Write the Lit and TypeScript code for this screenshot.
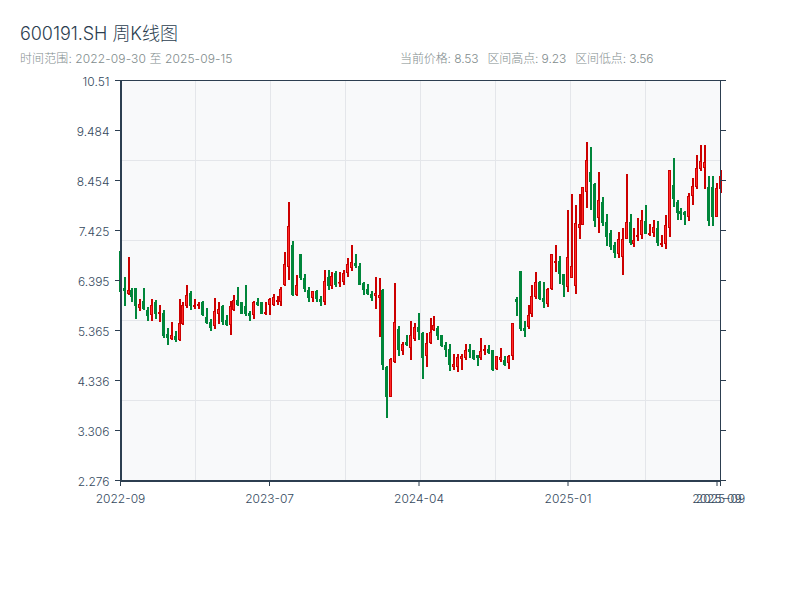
import { LitElement, html, css, svg } from "lit";
import { customElement } from "lit/decorators.js";

type Row = [number, number, number, number, number];
// [1 = up (red) / 0 = down (green), wick top, body top, body bottom, wick bottom], in 3x crop units
const A: Row[] = [
[0,213,213,335,335],[0,291,325,333,378],[1,231,330,342,345],[0,325,330,350,365],[0,325,325,378,417],[1,357,372,384,393],[0,325,363,387,390],[0,381,390,408,423],[1,357,376,405,423],[0,360,367,402,417],
[1,375,397,402,426],[0,390,399,468,474],[0,444,462,474,495],[1,426,465,477,480],[0,453,468,480,486],[1,357,429,480,483],[1,366,375,432,435],[1,315,345,378,385],[0,333,340,378,390],[1,357,375,381,387],
[1,366,372,378,387],[0,363,365,405,408],[0,384,411,430,432],[0,417,426,444,453],[1,354,393,438,447],[1,366,387,402,432],[0,375,378,426,435],[0,405,420,435,438],[1,363,378,435,465],[1,345,360,390,393],
[0,321,360,375,378],[0,366,366,402,402],[0,315,378,402,408],[0,393,400,408,423],[1,363,366,405,417],[0,354,366,375,378],[0,366,366,402,402],[1,366,396,402,405]];
const B: Row[] = [
[1,325,328,345,375],[1,312,322,345,348],[1,318,330,335,345],[1,292,298,335,348],[1,186,222,286,288],[1,36,108,230,270],[0,153,165,315,318],[1,255,286,316,318],[0,192,192,264,270],[0,252,264,297,306],
[0,292,300,324,336],[1,303,303,324,336],[0,300,303,327,336],[0,318,327,336,348],[1,240,273,336,345],[0,240,261,288,300],[1,246,258,288,297],[0,243,249,285,292],[1,246,276,280,292],[1,240,249,276,285],
[1,204,222,249,261],[1,165,216,234,243],[0,192,219,228,234],[0,219,228,285,285],[0,276,279,300,315],[0,282,297,312,315],[0,303,312,324,333],[1,261,309,318,357],[1,264,315,324,441],[0,297,300,525,540],
[0,528,531,621,684],[1,504,507,620,621],[1,279,396,516,519],[0,408,417,480,498],[1,456,462,483,495],[0,435,456,465,468],[1,393,435,473,510],[1,399,411,447,453],[0,369,411,426,450],[0,426,429,504,567],
[1,429,459,498,531],[1,384,426,459,462],[1,378,405,420,423],[0,408,414,438,450]];
const C: Row[] = [
[0,315,315,348,351],[0,336,345,360,381],[0,342,357,405,423],[1,372,402,411,420],[1,372,381,411,426],[1,372,378,387,420],[1,342,360,384,390],[0,342,357,366,384],[0,360,360,387,390],[0,375,375,384,408],
[1,324,363,384,390],[1,345,357,363,375],[0,345,357,369,372],[0,360,360,420,423],[1,378,378,417,420],[1,354,381,390,396],[0,378,390,405,408],[1,375,378,399,417],[1,279,279,378,390],[0,201,207,216,258],
[0,123,123,297,303],[0,273,294,303,321],[1,225,255,291,297],[1,165,198,252,261],[1,126,156,201,207],[0,153,156,207,210],[0,156,204,216,234],[1,174,177,222,231],[1,72,72,177,180],[1,45,93,99,126],
[0,78,93,132,162],[0,132,132,165,201]];
const D: Row[] = [
[1,240,381,471,486],[1,192,408,444,444],[1,225,279,468,492],[1,192,282,294,327],[1,171,171,285,285],[1,36,90,186,234],[0,51,126,156,240],[0,159,162,273,291],[1,126,210,264,309],[0,201,216,279,288],
[0,252,276,321,348],[0,300,309,351,360],[0,336,345,369,384],[1,306,327,372,384],[1,294,327,381,435],[1,132,276,327,327],[0,252,276,339,345],[1,294,330,342,351],[1,264,315,320,333],[1,240,270,315,327],
[0,225,273,312,312],[1,282,309,315,318],[1,270,291,309,321],[0,273,294,339,348],[1,315,339,345,351],[1,255,285,342,357],[1,120,120,294,321],[0,84,165,207,231],[0,210,216,249,270],[0,234,243,252,270],
[0,243,246,255,285],[1,189,198,261,273],[1,144,168,198,225],[1,75,114,171,177],[1,45,93,117,123],[1,45,96,114,177],[0,138,171,273,288],[0,138,171,261,288],[1,159,174,261,261],[1,120,138,177,189]];

const toPx = (rows: Row[], y0: number): Row[] =>
  rows.map(([u, a, b, c, d]) => [u, y0 + a / 3, y0 + b / 3, y0 + c / 3, y0 + d / 3] as Row);
const candles: Row[] = [...toPx(A, 180), ...toPx(B, 190), ...toPx(C, 230), ...toPx(D, 130)];

const X0 = 120, STEP = 600 / 153;
const gridX = [195.5, 270.5, 345.5, 420.5, 495.5, 570.5, 645.5];
const gridY = [160.5, 240.5, 320.5, 400.5];
const yLabels = ["10.51", "9.484", "8.454", "7.425", "6.395", "5.365", "4.336", "3.306", "2.276"];
const xLabels: [number, string][] = [[120.5, "2022-09"], [269.5, "2023-07"], [419, "2024-04"], [568, "2025-01"], [717, "2025-09"], [720.5, "2025-09"]];

@customElement("app-root")
export class AppRoot extends LitElement {
  static styles = css`
    :host { display: block; width: 800px; height: 600px; background: #fff; font-family: "Inter", "Noto Sans CJK SC", sans-serif; overflow: hidden; }
    .head { padding: 21px 20px 0; height: 49px; box-sizing: content-box; }
    h1 { margin: 0; font-size: 18px; line-height: 26px; font-weight: 300; letter-spacing: -0.05px; color: #2c3e50; }
    .sub { display: grid; grid-template-columns: 1fr 1fr; margin-top: 3px; font-size: 12px; line-height: 18px; font-weight: 300; letter-spacing: 0.1px; color: #7f8c8d; }
    .stats { display: flex; gap: 9px; letter-spacing: -0.1px; }
    svg { display: block; }
    .plot { fill: #f8f9fa; }
    .grid { stroke: #e4e6ea; stroke-width: 1; }
    .axis { stroke: #2c3e50; fill: none; }
    .lbl { font-size: 12px; font-weight: 300; fill: #34495e; font-family: "Inter", sans-serif; }
    .up { fill: #ff2a2a; stroke: #cc0000; stroke-width: 1; }
    .down { fill: #00863a; }
    .wu { fill: #cc0000; }
    .wd { fill: #00863a; }
  `;

  render() {
    return html`
      <div class="head">
        <h1>600191.SH 周K线图</h1>
        <div class="sub">
          <span>时间范围: 2022-09-30 至 2025-09-15</span>
          <span class="stats"><span>当前价格: 8.53</span><span>区间高点: 9.23</span><span>区间低点: 3.56</span></span>
        </div>
      </div>
      <svg width="800" height="530" viewBox="0 70 800 530">
        <rect class="plot" x="120" y="80" width="600" height="400"></rect>
        ${gridX.map((x) => svg`<line class="grid" x1=${x} x2=${x} y1="81" y2="480"></line>`)}
        ${gridY.map((y) => svg`<line class="grid" x1="121" x2="720" y1=${y} y2=${y}></line>`)}
        ${candles.map(([u, wt, bt, bb, wb], i) => {
          const x = Math.floor(X0 + STEP * i + 0.2);
          const t = Math.round(bt), h = Math.max(Math.round(bb) - t, 1);
          return svg`
            <rect class=${u ? "wu" : "wd"} x=${x} y=${Math.round(wt)} width="2" height=${Math.round(wb) - Math.round(wt)}></rect>
            ${u
              ? svg`<rect class="up" x=${x - 0.5} y=${t + 0.5} width="2" height=${Math.max(h - 1, 0.5)}></rect>`
              : svg`<rect class="down" x=${x - 1} y=${t} width="3" height=${h}></rect>`}`;
        })}
        <line class="axis" x1="120" x2="720" y1="80.5" y2="80.5"></line>
        <line class="axis" x1="720.5" x2="720.5" y1="80" y2="481"></line>
        <line class="axis" stroke-width="2" x1="121" x2="121" y1="80" y2="482"></line>
        <line class="axis" stroke-width="2" x1="120" x2="721" y1="481" y2="481"></line>
        ${yLabels.map((t, k) => {
          const y = 80.5 + 50 * k;
          return svg`
            <line class="axis" x1="115" x2="120" y1=${y} y2=${y}></line>
            <line class="axis" x1="721" x2="726" y1=${y} y2=${y}></line>
            <text class="lbl" x="109.5" y=${y + 5.5} text-anchor="end">${t}</text>`;
        })}
        ${xLabels.map(([x, t]) => svg`
          <line class="axis" x1=${x} x2=${x} y1="482" y2="486"></line>
          <text class="lbl" x=${x} y="502.5" text-anchor="middle">${t}</text>`)}
      </svg>
    `;
  }
}
